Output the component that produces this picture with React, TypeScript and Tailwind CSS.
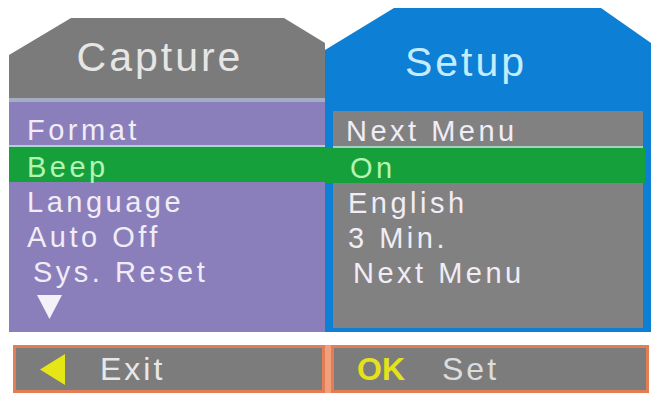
const leftRows = ['Format', 'Beep', 'Language', 'Auto Off', 'Sys. Reset']
const rightRows = ['Next Menu', 'On', 'English', '3 Min.', 'Next Menu']
const leftPad = ['pl-[18px]', 'pl-[18px]', 'pl-[18px]', 'pl-[18px]', 'pl-[24px]']
const rightPad = ['pl-[13px]', 'pl-[17px]', 'pl-[15px]', 'pl-[15px]', 'pl-[20px]']

const Row = ({ label, pad, active }: { label: string; pad: string; active?: boolean }) => (
  <div
    className={`flex h-[35px] items-center pt-[5px] ${pad} text-[29px] leading-none tracking-[3.5px] ${
      active ? 'text-[#b4f5b4]' : 'text-[#f1ecf6]'
    }`}
  >
    {label}
  </div>
)

const App = () => {
  return (
    <div
      className="h-[396px] w-[654px] overflow-hidden bg-white"
      style={{ fontFamily: '"Liberation Sans", Arial, sans-serif' }}
    >
      <div className="flex pl-[9px] pt-[8px]">
        {/* Capture column */}
        <div className="mt-[10px] flex w-[316px] flex-col">
          <div className="flex h-[80px] items-center justify-center bg-[#7b7b7b] pr-[14px] text-[41px] tracking-[3px] text-[#e6e6e6] [clip-path:polygon(0_37px,62px_0,275px_0,316px_25px,316px_100%,0_100%)]">
            Capture
          </div>
          <div className="h-[4px] bg-[#a3aec4]" />
          <div className="flex h-[230px] flex-col bg-[#8a7fbb] pt-[8px]">
            <Row label={leftRows[0]} pad={leftPad[0]} />
            <div className="h-[2px] bg-[#a8d8cc]" />
            <div className="bg-[#16a03c]">
              <Row label={leftRows[1]} pad={leftPad[1]} active />
            </div>
            {leftRows.slice(2).map((r, i) => (
              <Row key={r} label={r} pad={leftPad[i + 2]} />
            ))}
            <div className="flex h-[35px] items-center pl-[28px] pt-[4px]">
              <svg width="25" height="25" viewBox="0 0 25 25">
                <polygon points="0,1 25,1 12.5,25" fill="#f4f2f8" />
              </svg>
            </div>
          </div>
        </div>

        {/* Setup column */}
        <div className="flex h-[324px] w-[326px] flex-col bg-[#0d7fd5] [clip-path:polygon(0_42px,69px_0,276px_0,326px_35px,326px_100%,0_100%)]">
          <div className="flex h-[103px] items-center justify-center pr-[44px] pt-[6px] text-[41px] tracking-[3px] text-[#c4ecff]">
            Setup
          </div>
          <div className="mx-[8px] flex h-[217px] flex-col bg-[#818181]">
            <Row label={rightRows[0]} pad={rightPad[0]} />
            <div className="h-[2px] bg-[#a6cfc6]" />
            <div className="-ml-[8px] -mr-[2px] bg-[#16a03c] pl-[8px]">
              <Row label={rightRows[1]} pad={rightPad[1]} active />
            </div>
            {rightRows.slice(2).map((r, i) => (
              <Row key={i} label={r} pad={rightPad[i + 2]} />
            ))}
          </div>
        </div>
      </div>

      {/* bottom hint bar */}
      <div className="mt-[13px] flex pl-[13px]">
        <div className="flex h-[48px] w-[312px] items-center border-[3px] border-[#e27d55] bg-[#7c7c7c] pl-[24px]">
          <svg width="25" height="31" viewBox="0 0 25 31">
            <polygon points="25,0 25,31 0,15.5" fill="#e6e616" />
          </svg>
          <span className="ml-[35px] text-[32px] leading-none tracking-[3px] text-[#e8e8e8]">Exit</span>
        </div>
        <div className="h-[48px] w-[6px] bg-[#f2a07c]" />
        <div className="flex h-[48px] w-[318px] items-center border-[3px] border-[#e27d55] bg-[#7c7c7c] pl-[23px]">
          <span className="text-[32px] font-bold leading-none text-[#e4e21c]">OK</span>
          <span className="ml-[37px] text-[32px] leading-none tracking-[3px] text-[#dcdcdc]">Set</span>
        </div>
      </div>
    </div>
  )
}

export default App
